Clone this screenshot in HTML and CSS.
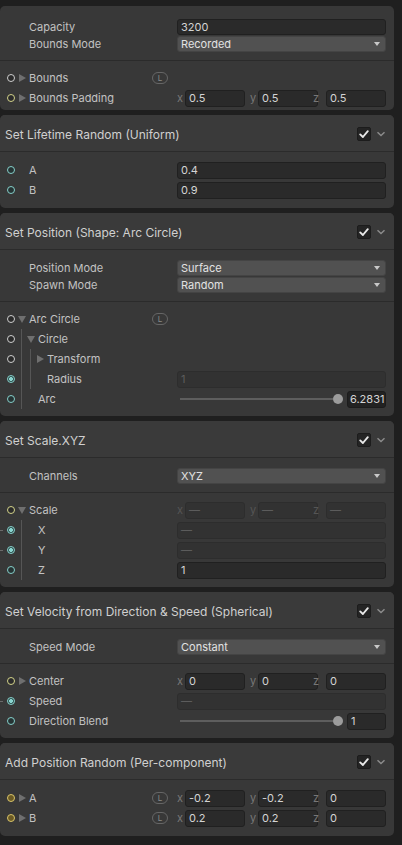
FILE: index.html
```html
<!DOCTYPE html>
<html>
<head>
<meta charset="utf-8">
<link rel="stylesheet" href="styles.css">
</head>
<body>
<div class="canvas">

  <div class="block first">
    <div class="settings top">
      <div class="srow"><span class="label">Capacity</span><div class="field">3200</div></div>
      <div class="srow"><span class="label">Bounds Mode</span><div class="dropdown">Recorded<span class="caret"></span></div></div>
    </div>
    <div class="props p1">
      <div class="prow">
        <div class="lead"><span class="edge"></span><span class="port w"></span><span class="tri r"></span><span class="label">Bounds</span><span class="lbadge">L</span></div>
        <div class="val"></div>
      </div>
      <div class="prow">
        <div class="lead"><span class="edge"></span><span class="port y"></span><span class="tri r"></span><span class="label">Bounds Padding</span></div>
        <div class="val vec">
          <span class="ax">x</span><div class="field">0.5</div>
          <span class="ax">y</span><div class="field">0.5</div>
          <span class="ax">z</span><div class="field">0.5</div>
        </div>
      </div>
    </div>
  </div>

  <div class="block">
    <div class="head"><span class="title">Set Lifetime Random (Uniform)</span><span class="check"><svg width="14" height="14" viewBox="0 0 14 14"><path d="M3.2 7.4 L5.9 10 L10.8 4.2" fill="none" stroke="#e8e8e8" stroke-width="1.9" stroke-linecap="round" stroke-linejoin="round"/></svg></span><span class="chev"><svg width="10" height="6" viewBox="0 0 10 6"><path d="M1.5 1.2 L5 4.6 L8.5 1.2" fill="none" stroke="#8c8c8c" stroke-width="1.4"/></svg></span></div>
    <div class="props p2">
      <div class="prow">
        <div class="lead"><span class="edge"></span><span class="port t"></span><span class="tri none"></span><span class="label">A</span></div>
        <div class="val"><div class="field">0.4</div></div>
      </div>
      <div class="prow">
        <div class="lead"><span class="edge"></span><span class="port t"></span><span class="tri none"></span><span class="label">B</span></div>
        <div class="val"><div class="field">0.9</div></div>
      </div>
    </div>
  </div>

  <div class="block">
    <div class="head"><span class="title">Set Position (Shape: Arc Circle)</span><span class="check"><svg width="14" height="14" viewBox="0 0 14 14"><path d="M3.2 7.4 L5.9 10 L10.8 4.2" fill="none" stroke="#e8e8e8" stroke-width="1.9" stroke-linecap="round" stroke-linejoin="round"/></svg></span><span class="chev"><svg width="10" height="6" viewBox="0 0 10 6"><path d="M1.5 1.2 L5 4.6 L8.5 1.2" fill="none" stroke="#8c8c8c" stroke-width="1.4"/></svg></span></div>
    <div class="settings">
      <div class="srow"><span class="label">Position Mode</span><div class="dropdown">Surface<span class="caret"></span></div></div>
      <div class="srow"><span class="label">Spawn Mode</span><div class="dropdown">Random<span class="caret"></span></div></div>
    </div>
    <div class="props">
      <div class="prow">
        <div class="lead"><span class="edge"></span><span class="port w"></span><span class="tri d"></span><span class="label">Arc Circle</span><span class="lbadge">L</span></div>
        <div class="val"></div>
      </div>
      <div class="prow">
        <div class="lead"><span class="edge"></span><span class="port w"></span><span class="guide"></span><span class="tri d"></span><span class="label">Circle</span></div>
        <div class="val"></div>
      </div>
      <div class="prow">
        <div class="lead"><span class="edge"></span><span class="port w"></span><span class="guide"></span><span class="guide"></span><span class="tri r"></span><span class="label">Transform</span></div>
        <div class="val"></div>
      </div>
      <div class="prow">
        <div class="lead"><span class="edge"></span><span class="port tf"></span><span class="guide"></span><span class="guide"></span><span class="tri none"></span><span class="label">Radius</span></div>
        <div class="val"><div class="field dis">1</div></div>
      </div>
      <div class="prow">
        <div class="lead"><span class="edge"></span><span class="port t"></span><span class="guide"></span><span class="tri none"></span><span class="label">Arc</span></div>
        <div class="val slider"><span class="track"></span><span class="thumb"></span><div class="field num">6.2831</div></div>
      </div>
    </div>
  </div>

  <div class="block">
    <div class="head"><span class="title">Set Scale.XYZ</span><span class="check"><svg width="14" height="14" viewBox="0 0 14 14"><path d="M3.2 7.4 L5.9 10 L10.8 4.2" fill="none" stroke="#e8e8e8" stroke-width="1.9" stroke-linecap="round" stroke-linejoin="round"/></svg></span><span class="chev"><svg width="10" height="6" viewBox="0 0 10 6"><path d="M1.5 1.2 L5 4.6 L8.5 1.2" fill="none" stroke="#8c8c8c" stroke-width="1.4"/></svg></span></div>
    <div class="settings">
      <div class="srow"><span class="label">Channels</span><div class="dropdown">XYZ<span class="caret"></span></div></div>
    </div>
    <div class="props">
      <div class="prow">
        <div class="lead"><span class="edge"></span><span class="port y"></span><span class="tri d"></span><span class="label">Scale</span></div>
        <div class="val vec dim">
          <span class="ax">x</span><div class="field dis">—</div>
          <span class="ax">y</span><div class="field dis">—</div>
          <span class="ax">z</span><div class="field dis">—</div>
        </div>
      </div>
      <div class="prow">
        <div class="lead"><span class="edge on"></span><span class="port tf"></span><span class="guide"></span><span class="tri none"></span><span class="label">X</span></div>
        <div class="val"><div class="field dis">—</div></div>
      </div>
      <div class="prow">
        <div class="lead"><span class="edge on"></span><span class="port tf"></span><span class="guide"></span><span class="tri none"></span><span class="label">Y</span></div>
        <div class="val"><div class="field dis">—</div></div>
      </div>
      <div class="prow">
        <div class="lead"><span class="edge"></span><span class="port t"></span><span class="guide"></span><span class="tri none"></span><span class="label">Z</span></div>
        <div class="val"><div class="field">1</div></div>
      </div>
    </div>
  </div>

  <div class="block">
    <div class="head"><span class="title">Set Velocity from Direction &amp; Speed (Spherical)</span><span class="check"><svg width="14" height="14" viewBox="0 0 14 14"><path d="M3.2 7.4 L5.9 10 L10.8 4.2" fill="none" stroke="#e8e8e8" stroke-width="1.9" stroke-linecap="round" stroke-linejoin="round"/></svg></span><span class="chev"><svg width="10" height="6" viewBox="0 0 10 6"><path d="M1.5 1.2 L5 4.6 L8.5 1.2" fill="none" stroke="#8c8c8c" stroke-width="1.4"/></svg></span></div>
    <div class="settings">
      <div class="srow"><span class="label">Speed Mode</span><div class="dropdown">Constant<span class="caret"></span></div></div>
    </div>
    <div class="props">
      <div class="prow">
        <div class="lead"><span class="edge"></span><span class="port y"></span><span class="tri r"></span><span class="label">Center</span></div>
        <div class="val vec">
          <span class="ax">x</span><div class="field">0</div>
          <span class="ax">y</span><div class="field">0</div>
          <span class="ax">z</span><div class="field">0</div>
        </div>
      </div>
      <div class="prow">
        <div class="lead"><span class="edge on"></span><span class="port tf"></span><span class="tri none"></span><span class="label">Speed</span></div>
        <div class="val"><div class="field dis">—</div></div>
      </div>
      <div class="prow">
        <div class="lead"><span class="edge"></span><span class="port t"></span><span class="tri none"></span><span class="label">Direction Blend</span></div>
        <div class="val slider"><span class="track"></span><span class="thumb"></span><div class="field num1">1</div></div>
      </div>
    </div>
  </div>

  <div class="block">
    <div class="head"><span class="title">Add Position Random (Per-component)</span><span class="check"><svg width="14" height="14" viewBox="0 0 14 14"><path d="M3.2 7.4 L5.9 10 L10.8 4.2" fill="none" stroke="#e8e8e8" stroke-width="1.9" stroke-linecap="round" stroke-linejoin="round"/></svg></span><span class="chev"><svg width="10" height="6" viewBox="0 0 10 6"><path d="M1.5 1.2 L5 4.6 L8.5 1.2" fill="none" stroke="#8c8c8c" stroke-width="1.4"/></svg></span></div>
    <div class="props p2">
      <div class="prow">
        <div class="lead"><span class="edge"></span><span class="port yf"></span><span class="tri r"></span><span class="label">A</span><span class="lbadge">L</span></div>
        <div class="val vec">
          <span class="ax">x</span><div class="field">-0.2</div>
          <span class="ax">y</span><div class="field">-0.2</div>
          <span class="ax">z</span><div class="field">0</div>
        </div>
      </div>
      <div class="prow">
        <div class="lead"><span class="edge"></span><span class="port yf"></span><span class="tri r"></span><span class="label">B</span><span class="lbadge">L</span></div>
        <div class="val vec">
          <span class="ax">x</span><div class="field">0.2</div>
          <span class="ax">y</span><div class="field">0.2</div>
          <span class="ax">z</span><div class="field">0</div>
        </div>
      </div>
    </div>
  </div>

</div>
</body>
</html>
```

FILE: styles.css
```css
html, body {
  margin: 0;
  padding: 0;
}
body {
  background: #1f1f1f;
  width: 402px;
  height: 845px;
  overflow: hidden;
  font-family: Inter, "Noto Sans", sans-serif;
  font-size: 11px;
  color: #c2c2c2;
}
.canvas {
  padding-top: 6px;
  display: flex;
  flex-direction: column;
  gap: 5px;
  width: 394px;
}
.block {
  background: #383838;
  border-radius: 5px;
}
.head {
  box-sizing: border-box;
  height: 37px;
  padding: 2px 8px 0 5px;
  border-bottom: 1px solid #2b2b2b;
  background: #3a3a3a;
  border-radius: 5px 5px 0 0;
  display: flex;
  align-items: center;
  font-size: 12px;
  color: #d0d0d0;
}
.title {
  flex: 1;
  white-space: nowrap;
}
.check {
  width: 14px;
  height: 14px;
  box-sizing: border-box;
  background: #242424;
  border: 1px solid #1c1c1c;
  border-radius: 2px;
  display: flex;
  align-items: center;
  justify-content: center;
  margin-right: 1px;
}
.check svg {
  display: block;
  flex: none;
}
.chev {
  width: 10px;
  margin-left: 4px;
  display: flex;
  align-items: center;
}
.chev svg {
  display: block;
}
.settings {
  padding: 9px 8px 8px 0;
  border-bottom: 1px solid #2b2b2b;
}
.settings.top {
  padding-top: 12px;
  padding-bottom: 8px;
}
.srow {
  display: grid;
  grid-template-columns: 177px 1fr;
  height: 17px;
  align-items: center;
}
.srow .label {
  padding-left: 29px;
}
.props {
  padding: 7px 8px 7px 0;
}
.props.p1 {
  padding-top: 7px;
  padding-bottom: 2px;
}
.props.p2 {
  padding-top: 8px;
  padding-bottom: 8px;
}
.prow {
  display: grid;
  grid-template-columns: 177px 1fr;
  height: 20px;
}
.lead {
  display: flex;
  align-items: stretch;
  min-width: 0;
}
.lead .label {
  display: flex;
  align-items: center;
  white-space: nowrap;
}
.edge {
  width: 7px;
  flex: none;
}
.edge.on {
  background: linear-gradient(#6a6a6a, #6a6a6a) 0 50% / 3px 1px no-repeat;
}
.port {
  width: 8px;
  flex: none;
}
.port::before {
  content: "";
  display: block;
  width: 8px;
  height: 8px;
  box-sizing: border-box;
  border-radius: 50%;
  margin-top: 6px;
  border: 1.5px solid #cfcfcf;
  background: #2b2b2b;
}
.port.y::before {
  border-color: #d3d38a;
}
.port.t::before {
  border-color: #86cfca;
  background: #263434;
}
.port.tf::before {
  border-color: #86cfca;
  background: radial-gradient(circle, #8ad4cf 0 1.8px, #2c4a48 2.2px);
}
.port.yf::before {
  border-color: #d8c46a;
  background: #6b5a24;
}
.guide {
  width: 9px;
  flex: none;
  background: linear-gradient(#565656, #565656) 6px 0 / 1px 100% no-repeat;
}
.tri {
  width: 14px;
  flex: none;
  display: flex;
  align-items: center;
  justify-content: center;
}
.tri.r::before {
  content: "";
  border-left: 7px solid #6f6f6f;
  border-top: 4px solid transparent;
  border-bottom: 4px solid transparent;
  margin-left: 1px;
}
.tri.d::before {
  content: "";
  border-top: 7px solid #6f6f6f;
  border-left: 4px solid transparent;
  border-right: 4px solid transparent;
  margin-top: 1px;
}
.lbadge {
  margin-left: auto;
  margin-right: 9px;
  align-self: center;
  width: 16px;
  height: 12px;
  box-sizing: border-box;
  border: 1px solid #666;
  border-radius: 6px;
  font-size: 8px;
  line-height: 10px;
  text-align: center;
  color: #8a8a8a;
}
.val {
  display: flex;
  align-items: center;
  min-width: 0;
}
.val > .field {
  flex: 1;
}
.field {
  height: 17px;
  box-sizing: border-box;
  background: #2a2a2a;
  border: 1px solid #202020;
  border-radius: 3px;
  padding-left: 3px;
  line-height: 15px;
  color: #d4d4d4;
  white-space: nowrap;
  overflow: hidden;
}
.srow .field {
  height: 16px;
  line-height: 14px;
}
.field.dis {
  background: #323232;
  border-color: #2d2d2d;
  color: #5c5c5c;
}
.dropdown {
  height: 16px;
  box-sizing: border-box;
  background: #515151;
  border: 1px solid #444;
  border-radius: 3px;
  padding-left: 3px;
  line-height: 14px;
  color: #e2e2e2;
  display: flex;
  align-items: center;
}
.caret {
  margin-left: auto;
  margin-right: 5px;
  border-top: 4px solid #c9c9c9;
  border-left: 3.5px solid transparent;
  border-right: 3.5px solid transparent;
}
.vec {
  display: grid;
  grid-template-columns: 8px 1fr 13px 1fr 8px 1fr;
}
.vec .ax {
  color: #777;
  font-size: 11px;
  line-height: 17px;
}
.vec .ax:nth-of-type(2) {
  padding-left: 5px;
}
.vec .ax:nth-of-type(3) {
  margin-left: -5px;
}
.vec.dim .ax {
  color: #555;
}
.slider {
  display: flex;
  align-items: center;
}
.track {
  flex: 1;
  height: 2px;
  background: #5e5e5e;
  margin-left: 3px;
}
.thumb {
  width: 10px;
  height: 10px;
  border-radius: 50%;
  background: #9c9c9c;
  margin-right: 4px;
  flex: none;
}
.field.num {
  width: 39px;
  flex: none;
  background: #222;
  border-color: #1c1c1c;
  padding-left: 2px;
}
.field.num1 {
  width: 39px;
  flex: none;
}
```
